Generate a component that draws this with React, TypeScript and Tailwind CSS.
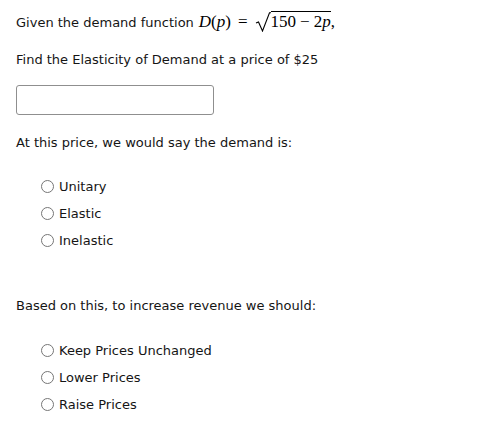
import React from 'react';

const sans = "font-['DejaVu_Sans',sans-serif]";
const serif = "font-['Liberation_Serif','Times_New_Roman',serif]";

function Radio({ label }: { label: string }) {
  return (
    <label className="flex items-center h-[27px]">
      <span className="w-[13px] h-[13px] rounded-full border border-[#767676] bg-white shrink-0" />
      <span className="ml-[5px]">{label}</span>
    </label>
  );
}

function MathExpr() {
  return (
    <span className={`${serif} text-[17px] ml-[5px] text-black whitespace-nowrap`}>
      <i>D</i>(<i>p</i>)<span className="mx-[7px]">=</span>
      <svg width="16" height="20" viewBox="0 0 16 20" className="inline-block align-[-5px]">
        <path d="M1 11 L3.5 10 L7.5 19 L14.5 0.7 L16 0.7" fill="none" stroke="#000" strokeWidth="1.1" />
      </svg>
      <span className="border-t-[1.2px] border-black">
        150<span className="mx-[4px]">−</span>2<i>p</i>
      </span>
      ,
    </span>
  );
}

export default function App() {
  return (
    <div className={`${sans} text-[13px] text-[#151515] pl-4 pt-[12px] bg-white min-h-[444px]`}>
      <p className="leading-5 h-5">
        Given the demand function
        <MathExpr />
      </p>

      <p className="h-5 flex items-center mt-[18px]">Find the Elasticity of Demand at a price of $25</p>

      <input
        type="text"
        className="block mt-[15px] w-[198px] h-[30px] border border-[#8f8f8f] rounded-[3px] bg-white outline-none"
      />

      <p className="h-5 flex items-center mt-[18px]">At this price, we would say the demand is:</p>

      <div className="ml-[25px] mt-[20px]">
        <Radio label="Unitary" />
        <Radio label="Elastic" />
        <Radio label="Inelastic" />
      </div>

      <p className="h-5 flex items-center mt-[42px]">Based on this, to increase revenue we should:</p>

      <div className="ml-[25px] mt-[21px]">
        <Radio label="Keep Prices Unchanged" />
        <Radio label="Lower Prices" />
        <Radio label="Raise Prices" />
      </div>
    </div>
  );
}
